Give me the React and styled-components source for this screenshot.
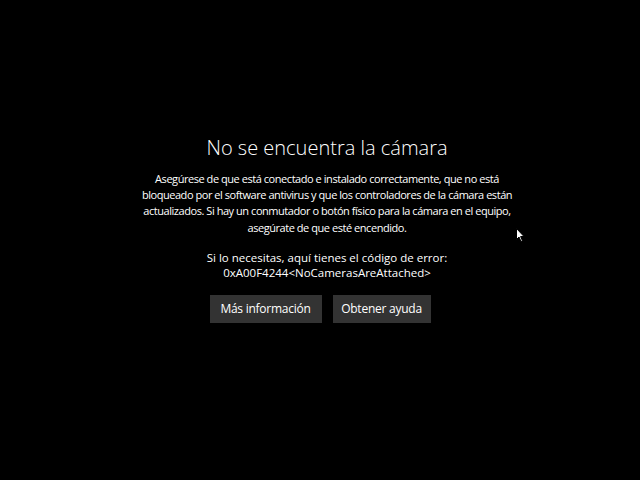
import React from "react";
import styled, { createGlobalStyle } from "styled-components";

const GlobalStyle = createGlobalStyle`
  html, body {
    margin: 0;
    padding: 0;
    background: #000;
  }
  body {
    font-family: "Open Sans", "Noto Sans", sans-serif;
    color: #fff;
  }
`;

const Screen = styled.div`
  position: relative;
  width: 640px;
  height: 480px;
  background: #000;
  display: flex;
  flex-direction: column;
  align-items: center;
  padding-top: 134px;
  box-sizing: border-box;
`;

const TextBlock = styled.div`
  width: 400px;
  margin-left: 14px;
  display: flex;
  flex-direction: column;
  align-items: center;
  text-align: center;
`;

const Title = styled.h1`
  margin: 0;
  font-size: 20px;
  font-weight: 300;
  line-height: 28px;
  color: #fff;
`;

const Paragraph = styled.p`
  margin: ${(p) => p.$top || 0}px 0 0;
  font-size: ${(p) => p.$size || 11}px;
  line-height: ${(p) => p.$lh || 16.2}px;
  letter-spacing: ${(p) => p.$ls ?? -0.45}px;
  white-space: nowrap;
  color: #fff;
`;

const Buttons = styled.div`
  display: flex;
  gap: 11px;
  margin-top: 14px;
`;

const Button = styled.button`
  height: 28px;
  width: ${(p) => p.$w}px;
  border: none;
  background: #333333;
  color: #fff;
  font-family: "Open Sans", "Noto Sans", sans-serif;
  font-size: 12px;
  letter-spacing: -0.25px;
  padding: 0;
  cursor: default;
`;

const Cursor = styled.svg`
  position: absolute;
  left: 516px;
  top: 228px;
`;

export default function App() {
  return (
    <>
      <GlobalStyle />
      <Screen>
        <TextBlock>
          <Title>No se encuentra la cámara</Title>
          <Paragraph $top={9}>
            Asegúrese de que está conectado e instalado correctamente, que no está
            <br />
            bloqueado por el software antivirus y que los controladores de la cámara están
            <br />
            actualizados. Si hay un conmutador o botón físico para la cámara en el equipo,
            <br />
            asegúrate de que esté encendido.
          </Paragraph>
          <Paragraph $top={14} $size={11.5} $ls={0} $lh={15.5}>
            Si lo necesitas, aquí tienes el código de error:
            <br />
            0xA00F4244&lt;NoCamerasAreAttached&gt;
          </Paragraph>
        </TextBlock>
        <Buttons>
          <Button $w={112}>Más información</Button>
          <Button $w={98}>Obtener ayuda</Button>
        </Buttons>
        <Cursor width="10" height="15" viewBox="0 0 10 15">
          <path d="M0.5 0.5 L0.5 11.5 L3 9 L5 13.5 L6.5 12.8 L4.6 8.5 L8 8.5 Z" fill="#fff" stroke="#000" strokeWidth="1" />
        </Cursor>
      </Screen>
    </>
  );
}
